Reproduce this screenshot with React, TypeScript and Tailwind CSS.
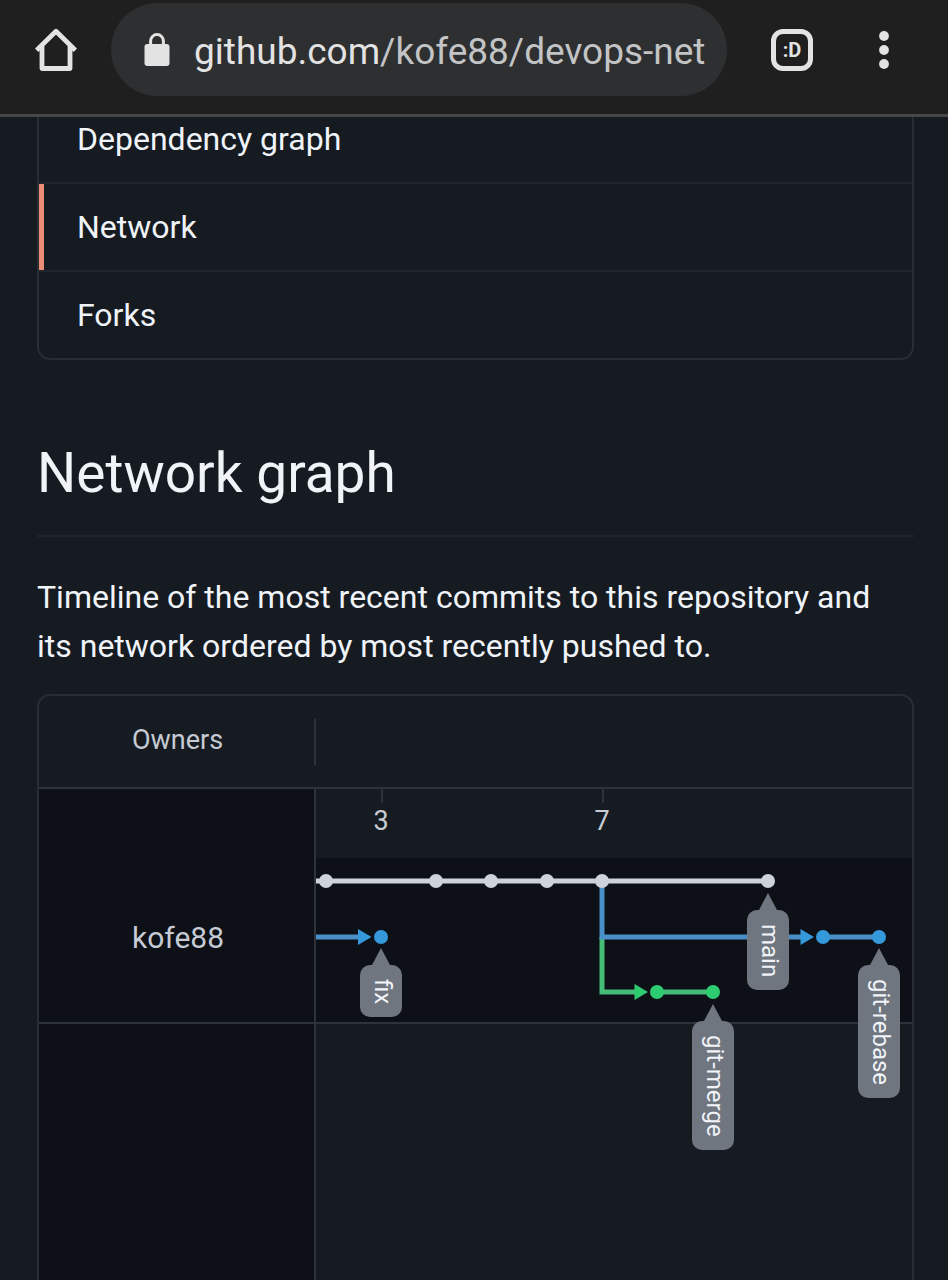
import React from "react";

const MAIN = "#ced2da";
const BLUE_LINE = "#4a90c8";
const BLUE = "#3498db";
const GREEN_LINE = "#46bd77";
const GREEN = "#2ecc71";

const navItems = [
  { label: "Dependency graph", active: false },
  { label: "Network", active: true },
  { label: "Forks", active: false },
];

const commits = [
  { x: 10, y: 92, color: MAIN },
  { x: 120, y: 92, color: MAIN },
  { x: 175, y: 92, color: MAIN },
  { x: 231, y: 92, color: MAIN },
  { x: 286, y: 92, color: MAIN },
  { x: 452, y: 92, color: MAIN },
  { x: 65, y: 148, color: BLUE },
  { x: 507, y: 148, color: BLUE },
  { x: 563, y: 148, color: BLUE },
  { x: 341, y: 203, color: GREEN },
  { x: 397, y: 203, color: GREEN },
];

const days = [
  { label: "3", x: 65 },
  { label: "7", x: 286 },
];

const branches = [
  { name: "main", x: 452, y: 104 },
  { name: "fix", x: 65, y: 159 },
  { name: "git-merge", x: 397, y: 215 },
  { name: "git-rebase", x: 563, y: 159 },
];

function HomeIcon() {
  return (
    <svg width="42" height="44" viewBox="0 0 42 44" fill="none" stroke="#e3e3e3" strokeWidth="4.8" strokeLinejoin="round" aria-hidden="true">
      <path d="M1.6 22.2 21 3.2l19.4 19" />
      <path d="M7 18v22.500h28V18" />
    </svg>
  );
}

function LockIcon() {
  return (
    <svg width="26" height="34" viewBox="0 0 26 34" aria-hidden="true">
      <rect x="0.5" y="11" width="25" height="22" rx="3" fill="#e3e3e3" />
      <path d="M6.6 12V8a6.4 6.4 0 0 1 12.8 0v4" fill="none" stroke="#e3e3e3" strokeWidth="3" />
    </svg>
  );
}

function BrowserBar() {
  return (
    <header className="relative z-10 flex h-[117px] shrink-0 items-start border-b-[3px] border-[#474747] bg-[#1f1f1f] pt-[3px] pr-[54px] pl-[35px]">
      <button type="button" aria-label="Home" className="flex h-[93px] w-[42px] shrink-0 items-center justify-center">
        <HomeIcon />
      </button>
      <button type="button" aria-label="Address bar" className="ml-[34px] flex h-[93px] min-w-0 flex-1 items-center gap-6 overflow-hidden rounded-full bg-[#2e2f31] pr-5 pl-[33px] text-left">
        <span className="shrink-0">
          <LockIcon />
        </span>
        <span className="pt-1 text-[37px] leading-[44px] whitespace-nowrap text-[#c3c4c5]">
          <span className="text-[#e3e3e3]">github.com</span>/kofe88/devops-net
        </span>
      </button>
      <button type="button" aria-label="Open tabs" className="ml-11 flex h-[93px] w-[42px] shrink-0 items-center">
        <span className="flex h-[42px] w-[42px] items-center justify-center rounded-[12px] border-[5px] border-[#e3e3e3] text-[20px] leading-6 font-bold text-[#e3e3e3]">
          :D
        </span>
      </button>
      <button type="button" aria-label="More options" className="ml-[61px] flex h-[93px] w-5 shrink-0 items-center justify-center">
        <svg width="10" height="38" viewBox="0 0 10 38" fill="#e3e3e3" aria-hidden="true">
          <circle cx="5" cy="5" r="4.9" />
          <circle cx="5" cy="19" r="4.9" />
          <circle cx="5" cy="33" r="4.9" />
        </svg>
      </button>
    </header>
  );
}

function SideNav() {
  return (
    <nav className="-mt-[23px] overflow-hidden rounded-[13px] border-2 border-[#292e35]">
      <ul className="divide-y-2 divide-[#20252c]">
        {navItems.map((item) => (
          <li key={item.label}>
            <a
              href="#"
              aria-current={item.active ? "page" : undefined}
              className={
                "flex h-[86px] items-center text-[32px] leading-[49px] text-[#f0f4f9] " +
                (item.active ? "border-l-[5px] border-[#ec8e75] pl-[33px]" : "pl-[38px]")
              }
            >
              {item.label}
            </a>
          </li>
        ))}
      </ul>
    </nav>
  );
}

function BranchTag({ name, x, y }: { name: string; x: number; y: number }) {
  return (
    <div className="absolute flex w-[42px] -translate-x-1/2 flex-col items-center" style={{ left: x, top: y }}>
      <svg width="20" height="17" viewBox="0 0 20 17" fill="#707680" aria-hidden="true">
        <path d="M10 0 19 17H1z" />
      </svg>
      <span className="w-[42px] rounded-[10px] bg-[#707680] pt-[14px] pb-[13px] pl-1 text-[24px] leading-[38px] text-[#f0f4f9] [writing-mode:vertical-rl]">
        {name}
      </span>
    </div>
  );
}

function Timeline() {
  return (
    <div className="relative flex min-w-0 flex-1 flex-col">
      <div className="h-[69px] shrink-0" />
      <div className="h-[166px] shrink-0 border-b-2 border-[#2e333b] bg-[#0d1017]" />
      <svg className="absolute inset-0 h-[235px] w-full" fill="none" role="img" aria-label="Commit graph">
        <path d="M66 0v14M287 0v14" stroke="#2e333b" strokeWidth="2" />
        <path d="M286 148v55h34" stroke={GREEN_LINE} strokeWidth="5" />
        <path d="M286 92v56h200M507 148h56M0 148h44" stroke={BLUE_LINE} strokeWidth="5" />
        <path d="M341 203h56" stroke={GREEN_LINE} strokeWidth="5" />
        <path d="M0 92h452" stroke={MAIN} strokeWidth="5" />
        <path d="M42 140 55.500 148 42 156zM484.500 140 498 148l-13.500 8z" fill={BLUE} />
        <path d="M318.500 195 332 203l-13.500 8z" fill={GREEN} />
        {commits.map((c) => (
          <circle key={c.x + "-" + c.y} cx={c.x} cy={c.y} r="7" fill={c.color} />
        ))}
      </svg>
      {days.map((d) => (
        <span key={d.label} className="absolute top-4 -translate-x-1/2 text-[27px] leading-8 text-[#c6cbd3]" style={{ left: d.x }}>
          {d.label}
        </span>
      ))}
      {branches.map((b) => (
        <BranchTag key={b.name} {...b} />
      ))}
    </div>
  );
}

export default function App() {
  return (
    <div className="flex min-h-screen flex-col bg-[#161b22] font-['Roboto',sans-serif]">
      <BrowserBar />
      <main className="flex flex-1 flex-col pr-[34px] pl-[37px]">
        <SideNav />
        <h1 className="mt-[72px] border-b-2 border-[#20252c] pb-[21px] text-[55px] leading-[82px] text-[#f0f4f9]">Network graph</h1>
        <p className="mt-9 pr-4 text-[32px] leading-[49px] text-[#f0f4f9]">
          Timeline of the most recent commits to this repository and its network ordered by most recently pushed to.
        </p>
        <section className="mt-[23px] flex flex-1 flex-col rounded-t-[13px] border-2 border-b-0 border-[#292e35]">
          <div className="flex h-[93px] shrink-0 items-center border-b-2 border-[#2e333b]">
            <div className="flex h-[46px] w-[277px] items-center border-r-2 border-[#2e333b] pb-1 pl-[93px] text-[27px] leading-8 text-[#c6cbd3]">
              Owners
            </div>
          </div>
          <div className="flex flex-1">
            <div className="w-[277px] shrink-0 border-r-2 border-[#2e333b] bg-[#0d1017]">
              <div className="flex h-[235px] items-end border-b-2 border-[#2e333b] pb-[64px] pl-[93px]">
                <a href="#" className="text-[30px] leading-[40px] text-[#c6cbd3]">kofe88</a>
              </div>
            </div>
            <Timeline />
          </div>
        </section>
      </main>
    </div>
  );
}
